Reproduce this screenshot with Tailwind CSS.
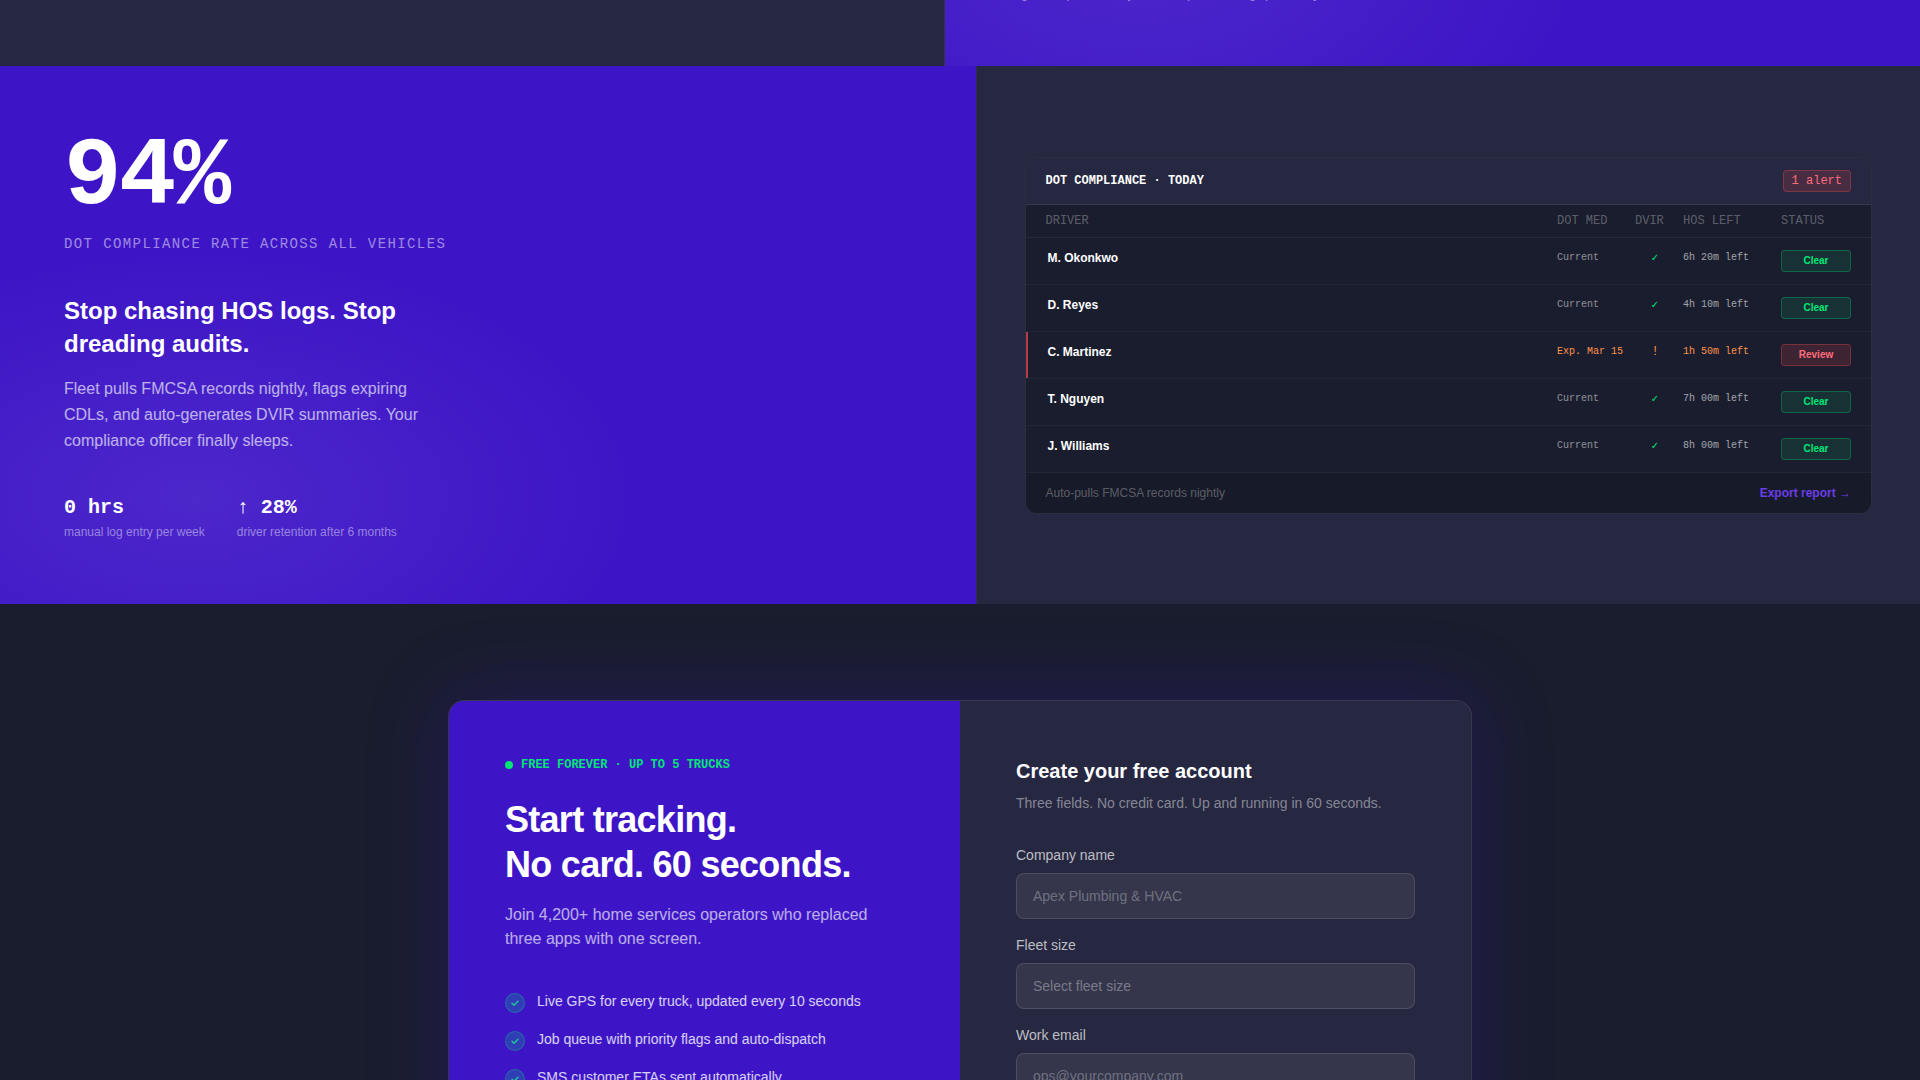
<!DOCTYPE html>
<html lang="en">
<head>
  <meta charset="UTF-8" />
  <meta name="viewport" content="width=device-width, initial-scale=1.0" />
  <title>Fleet</title>
  <script src="https://cdn.jsdelivr.net/npm/@tailwindcss/browser@4"></script>
</head>
<body class="bg-[#1a1d2e] text-white font-['Liberation_Sans',Arial,sans-serif] overflow-x-hidden">

  <!-- Savings panel, scrolled almost out of view -->
  <section class="flex h-[66px] overflow-hidden">
    <div class="flex-1 border-r border-white/6 bg-[#262741] px-12"></div>
    <div class="flex-1 flex items-end bg-[#3d15c6] bg-[radial-gradient(442px_244px_at_20%_-42px,rgba(255,255,255,0.08),transparent)] px-16 pb-16">
      <div class="flex gap-8 text-xs text-white/50">
        <p>avg saved per service job</p>
        <p>repeat bookings per facility</p>
      </div>
    </div>
  </section>

  <!-- Compliance -->
  <section class="flex">
    <div class="flex-1 border-r border-[#2f2a5a] bg-[#3d15c6] bg-[radial-gradient(ellipse_at_20%_80%,rgba(255,255,255,0.08),transparent_40%)] p-16">
      <p class="font-['Liberation_Mono',monospace] text-8xl leading-none font-bold tracking-[-0.03em]">94%</p>
      <p class="mt-2 font-['Liberation_Mono',monospace] text-sm tracking-widest text-white/50 uppercase">DOT compliance rate across all vehicles</p>
      <h2 class="mt-10 max-w-sm text-2xl leading-snug font-bold">Stop chasing HOS logs. Stop dreading audits.</h2>
      <p class="mt-4 max-w-sm leading-[26px] text-white/65">Fleet pulls FMCSA records nightly, flags expiring CDLs, and auto-generates DVIR summaries. Your compliance officer finally sleeps.</p>
      <div class="mt-10 flex gap-8">
        <div>
          <p class="font-['Liberation_Mono',monospace] text-xl font-bold">0 hrs</p>
          <p class="mt-0.5 text-xs text-white/45">manual log entry per week</p>
        </div>
        <div>
          <p class="font-['Liberation_Mono',monospace] text-xl font-bold">↑ 28%</p>
          <p class="mt-0.5 text-xs text-white/45">driver retention after 6 months</p>
        </div>
      </div>
    </div>

    <div class="flex-1 flex items-center bg-[#262741] px-12 pt-px">
      <div class="w-full overflow-hidden rounded-xl border border-white/8 bg-[#1a1d2e]">
        <div class="flex items-center justify-between border-b border-white/8 bg-[#262741] px-5 py-3">
          <h3 class="font-['Liberation_Mono',monospace] text-xs font-bold">DOT COMPLIANCE · TODAY</h3>
          <span class="rounded-sm border border-[#ff4d4d]/30 bg-[#ff4d4d]/16 px-2 py-0.5 font-['Liberation_Mono',monospace] text-xs text-[#ff6b7a]">1 alert</span>
        </div>
        <table class="w-full table-fixed border-collapse text-left">
          <colgroup>
            <col />
            <col class="w-[78px]" />
            <col class="w-12" />
            <col class="w-[98px]" />
            <col class="w-[90px]" />
          </colgroup>
          <thead class="font-['Liberation_Mono',monospace] text-xs text-white/30">
            <tr class="h-[33px] border-b border-white/6">
              <th class="pl-5 font-normal">DRIVER</th>
              <th class="font-normal">DOT MED</th>
              <th class="font-normal">DVIR</th>
              <th class="font-normal">HOS LEFT</th>
              <th class="font-normal">STATUS</th>
            </tr>
          </thead>
          <tbody id="drivers" class="font-['Liberation_Mono',monospace] text-[10px] leading-4"></tbody>
        </table>
        <div class="flex items-center justify-between bg-[#171a28] px-5 py-3 text-xs">
          <span class="text-white/30">Auto-pulls FMCSA records nightly</span>
          <a href="#" class="font-bold text-[#6a3de8]">Export report →</a>
        </div>
      </div>
    </div>
  </section>

  <!-- Sign up -->
  <section class="px-6 py-24">
    <div class="mx-auto flex max-w-5xl overflow-hidden rounded-2xl border border-white/8 bg-[#262741] shadow-[0_0_80px_rgba(61,21,198,0.25)]">
      <div class="flex-1 bg-[#3d15c6] p-14">
        <p class="flex items-center gap-2 font-['Liberation_Mono',monospace] text-xs font-bold text-[#00e676]">
          <span class="size-2 rounded-full bg-[#00e676]"></span>FREE FOREVER · UP TO 5 TRUCKS
        </p>
        <h2 class="mt-6 text-4xl leading-tight font-bold tracking-[-0.02em]">Start tracking.<br />No card. 60 seconds.</h2>
        <p class="mt-4 text-base text-white/65">Join 4,200+ home services operators who replaced three apps with one screen.</p>
        <ul id="perks" class="mt-10 flex flex-col gap-4 text-sm text-white/80"></ul>
      </div>

      <form class="flex-1 p-14 text-sm">
        <h2 class="text-xl font-bold">Create your free account</h2>
        <p class="mt-2 text-white/45">Three fields. No credit card. Up and running in 60 seconds.</p>
        <div class="mt-8 flex flex-col gap-4">
          <div>
            <label for="company" class="block text-white/70">Company name</label>
            <input id="company" type="text" placeholder="Apex Plumbing &amp; HVAC" class="mt-2 block w-full rounded-lg border border-white/12 bg-[#35364c] px-4 py-3 placeholder:text-white/30" />
          </div>
          <div>
            <label for="fleet-size" class="block text-white/70">Fleet size</label>
            <select id="fleet-size" class="mt-2 block w-full appearance-none rounded-lg border border-white/12 bg-[#35364c] px-4 py-3 text-white/35">
              <option>Select fleet size</option>
              <option>1–5 trucks</option>
              <option>6–20 trucks</option>
              <option>21+ trucks</option>
            </select>
          </div>
          <div>
            <label for="email" class="block text-white/70">Work email</label>
            <input id="email" type="email" placeholder="ops@yourcompany.com" class="mt-2 block w-full rounded-lg border border-white/12 bg-[#35364c] px-4 py-3 placeholder:text-white/30" />
          </div>
          <button type="submit" class="mt-2 rounded-lg bg-[#3d15c6] px-4 py-3 font-bold">Start free</button>
        </div>
      </form>
    </div>
  </section>

  <script>
    const drivers = [
      { name: "M. Okonkwo", med: "Current", hos: "6h 20m left" },
      { name: "D. Reyes", med: "Current", hos: "4h 10m left" },
      { name: "C. Martinez", med: "Exp. Mar 15", hos: "1h 50m left", review: true },
      { name: "T. Nguyen", med: "Current", hos: "7h 00m left" },
      { name: "J. Williams", med: "Current", hos: "8h 00m left" },
    ];

    document.getElementById("drivers").innerHTML = drivers.map(d => `
      <tr class="h-[47px] border-b border-white/4 align-top">
        <td class="p-0"><div class="h-[46px] border-l-2 ${d.review ? "border-[#b83a48]" : "border-transparent"} pt-3 pl-5 font-['Liberation_Sans',Arial,sans-serif] text-xs font-bold">${d.name}</div></td>
        <td class="pt-3 ${d.review ? "text-[#ff9248]" : "text-white/50"}">${d.med}</td>
        <td class="pt-3 pr-2 text-center ${d.review ? "text-xs text-[#ff9248]" : "font-['DejaVu_Sans',sans-serif] font-bold text-[#00e676]"}">${d.review ? "!" : "✓"}</td>
        <td class="pt-3 ${d.review ? "text-[#ff9248]" : "text-white/60"}">${d.hos}</td>
        <td class="pt-3 pr-5"><span class="block rounded-sm border py-0.5 text-center font-['Liberation_Sans',Arial,sans-serif] font-bold ${d.review ? "border-[#ff4d4d]/30 bg-[#ff4d4d]/16 text-[#ff6b7a]" : "border-[#00e676]/30 bg-[#00e676]/10 text-[#00e676]"}">${d.review ? "Review" : "Clear"}</span></td>
      </tr>`).join("");

    const perks = [
      "Live GPS for every truck, updated every 10 seconds",
      "Job queue with priority flags and auto-dispatch",
      "SMS customer ETAs sent automatically",
    ];

    document.getElementById("perks").innerHTML = perks.map(p => `
      <li class="flex items-start gap-3">
        <span class="mt-0.5 flex size-5 shrink-0 items-center justify-center rounded-full border border-[#00e676]/25 bg-[#00e676]/20">
          <svg class="size-2.5" viewBox="0 0 10 10" fill="none" stroke="#1fc3a0" stroke-width="1.5" stroke-linecap="round" stroke-linejoin="round"><path d="M2 5.2 4 7.2 8 3.2" /></svg>
        </span>
        ${p}
      </li>`).join("");
  </script>
</body>
</html>
